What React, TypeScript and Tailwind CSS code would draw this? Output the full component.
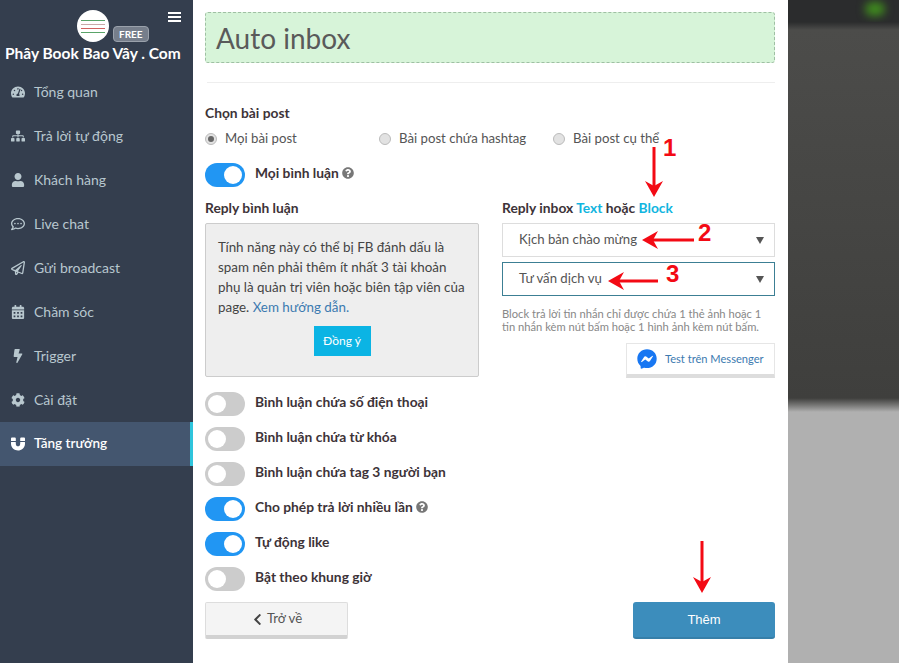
import React from 'react';
import {
  FaTachometerAlt,
  FaSitemap,
  FaUser,
  FaRegCommentDots,
  FaRegPaperPlane,
  FaCalendarAlt,
  FaBolt,
  FaCog,
  FaMagnet,
  FaQuestionCircle,
  FaChevronLeft,
  FaFacebookMessenger,
} from 'react-icons/fa';

const menu = [
  { label: 'Tổng quan', icon: FaTachometerAlt },
  { label: 'Trả lời tự động', icon: FaSitemap },
  { label: 'Khách hàng', icon: FaUser },
  { label: 'Live chat', icon: FaRegCommentDots },
  { label: 'Gửi broadcast', icon: FaRegPaperPlane },
  { label: 'Chăm sóc', icon: FaCalendarAlt },
  { label: 'Trigger', icon: FaBolt },
  { label: 'Cài đặt', icon: FaCog },
  { label: 'Tăng trưởng', icon: FaMagnet, active: true },
];

function Toggle({ on }: { on?: boolean }) {
  return (
    <div className={`flex h-6 w-10 shrink-0 items-center rounded-full px-[3px] ${on ? 'justify-end bg-[#2196f3]' : 'justify-start bg-[#ccc]'}`}>
      <div className="h-[18px] w-[18px] rounded-full bg-white" />
    </div>
  );
}

function ToggleRow({ on, label, help }: { on?: boolean; label: string; help?: boolean }) {
  return (
    <div className="flex h-6 items-center gap-[10px]">
      <Toggle on={on} />
      <span className="pb-1 text-[13.8px] font-bold text-[#3d3338]">{label}</span>
      {help && <FaQuestionCircle className="mb-1 -ml-[7px] text-[12px] text-[#777]" />}
    </div>
  );
}

function Radio({ on, label, className }: { on?: boolean; label: string; className?: string }) {
  return (
    <div className={`flex items-center gap-[8px] ${className ?? ''}`}>
      <div className="flex h-3 w-3 items-center justify-center rounded-full border border-[#bbb] bg-[#e2e2e2]">
        {on && <div className="h-[6px] w-[6px] rounded-full bg-[#666]" />}
      </div>
      <span className="text-[13.2px] text-[#555]">{label}</span>
    </div>
  );
}

function SelectBox({ label, focus }: { label: string; focus?: boolean }) {
  return (
    <div className={`flex h-[34px] items-center justify-between border bg-white pl-[16px] pr-[10px] ${focus ? 'border-[#3c7f94]' : 'border-[#ddd]'}`}>
      <span className="text-[13.2px] text-[#555]">{label}</span>
      <span className="h-0 w-0 border-x-[4px] border-t-[7px] border-x-transparent border-t-[#555]" />
    </div>
  );
}

// red annotation arrow, drawn pointing right and rotated by the caller
function Arrow({ length, className }: { length: number; className: string }) {
  return (
    <svg className={`absolute ${className}`} width={length} height="18" viewBox={`0 0 ${length} 18`}>
      <path d={`M0 7.5h${length - 10}v3H0z`} fill="#f30a14" />
      <path d={`M${length - 16} 0L${length} 9L${length - 16} 18L${length - 11} 9z`} fill="#f30a14" />
    </svg>
  );
}

export default function App() {
  return (
    <div className="relative flex h-[663px] w-full overflow-hidden bg-white font-['Lato',sans-serif]">
      <aside className="w-[193px] shrink-0 bg-[#343e4e]">
        <div className="relative h-[70px]">
          <div className="absolute left-[77px] top-[10px] flex h-8 w-8 flex-col items-center justify-center gap-[3px] rounded-full bg-white">
            <div className="h-px w-6 bg-[#5aa469]" />
            <div className="h-px w-6 bg-[#c9a9a9]" />
            <div className="h-px w-6 bg-[#d0605f]" />
            <div className="h-px w-6 bg-[#5aa469]" />
          </div>
          <div className="absolute left-[113px] top-[26px] rounded-[4px] border border-[#9aa1ab] bg-[#767e8b] px-[5px] text-[10px] font-bold leading-[14px] text-white">FREE</div>
          <div className="absolute left-[168px] top-[12px] flex w-[13px] flex-col gap-[2px]">
            <div className="h-[2px] bg-white" />
            <div className="h-[2px] bg-white" />
            <div className="h-[2px] bg-white" />
          </div>
          <div className="absolute left-[5px] top-[43px] whitespace-nowrap text-[15.5px] font-bold leading-5 text-white">Phây Book Bao Vây . Com</div>
        </div>
        <nav>
          {menu.map((item) => (
            <div
              key={item.label}
              className={`flex h-[44px] items-center pl-[11px] ${item.active ? 'border-r-[3px] border-[#2ec4dc] bg-[#44566f] font-semibold text-white' : 'text-[#b8c7ce]'}`}
            >
              <span className="flex w-[23px] shrink-0 text-[14px]">
                <item.icon />
              </span>
              <span className={`pb-[2px] ${item.active ? 'text-[13.5px]' : 'text-[14px]'}`}>{item.label}</span>
            </div>
          ))}
        </nav>
      </aside>

      <main className="w-[595px] shrink-0 pl-3 pr-[13px] pt-3">
        <div className="flex h-[51px] items-center rounded-[3px] border border-dashed border-[#9fbfa3] bg-[#d7f4d9] pl-[10px]">
          <h1 className="text-[28px] text-[#5a5a5a]">Auto inbox</h1>
        </div>
        <div className="ml-[2px] mt-[19px] h-px bg-[#eee]" />
        <div className="mt-[20px] text-[13.8px] font-bold leading-5 text-[#3d3338]">Chọn bài post</div>
        <div className="mt-[6px] flex h-5 items-center">
          <Radio on label="Mọi bài post" className="w-[174px]" />
          <Radio label="Bài post chứa hashtag" className="w-[174px]" />
          <Radio label="Bài post cụ thể" />
        </div>
        <div className="mt-[14px]">
          <ToggleRow on label="Mọi bình luận" help />
        </div>

        <div className="mt-[11px] flex gap-[23px]">
          <div className="w-[274px] shrink-0">
            <div className="text-[13.8px] font-bold leading-5 text-[#3d3338]">Reply bình luận</div>
            <div className="mt-[5px] flex h-[154px] flex-col items-center rounded-[2px] border border-[#ccc] bg-[#eee] pl-[12px] pr-[9px] pt-[13px]">
              <p className="self-start text-[13.4px] leading-5 text-[#444]">
                Tính năng này có thể bị FB đánh dấu là spam nên phải thêm ít nhất 3 tài khoản phụ là quản trị viên hoặc biên tập viên của page.{' '}
                <span className="text-[#3c7ab0]">Xem hướng dẫn.</span>
              </p>
              <div className="mt-[9px] -ml-[3px] flex h-[30px] w-[57px] items-center justify-center bg-[#0bb4e4] text-[12px] text-white">Đồng ý</div>
            </div>
          </div>
          <div className="min-w-0 flex-1">
            <div className="text-[13.8px] font-bold leading-5 text-[#3d3338]">
              Reply inbox <span className="text-[#12b5e0]">Text</span> hoặc <span className="text-[#12b5e0]">Block</span>
            </div>
            <div className="mt-[5px] flex flex-col gap-[5px]">
              <SelectBox label="Kịch bản chào mừng" />
              <SelectBox label="Tư vấn dịch vụ" focus />
            </div>
            <p className="mt-[11px] text-[11.2px] leading-[13px] text-[#888]">
              Block trả lời tin nhắn chỉ được chứa 1 thẻ ảnh hoặc 1 tin nhắn kèm nút bấm hoặc 1 hình ảnh kèm nút bấm.
            </p>
            <div className="mt-[10px] flex justify-end">
              <div className="flex h-[35px] w-[149px] items-center gap-[8px] border border-b-4 border-[#e6e6e6] border-b-[#ddd] bg-white pl-[10px]">
                <FaFacebookMessenger className="text-[20px] text-[#1877f2]" />
                <span className="text-[11.1px] text-[#3c7ab0]">Test trên Messenger</span>
              </div>
            </div>
          </div>
        </div>

        <div className="mt-[14px] flex flex-col gap-[11px]">
          <ToggleRow label="Bình luận chứa số điện thoại" />
          <ToggleRow label="Bình luận chứa từ khóa" />
          <ToggleRow label="Bình luận chứa tag 3 người bạn" />
          <ToggleRow on label="Cho phép trả lời nhiều lần" help />
          <ToggleRow on label="Tự động like" />
          <ToggleRow label="Bật theo khung giờ" />
        </div>

        <div className="mt-[11px] flex justify-between">
          <div className="flex h-[37px] w-[143px] items-center justify-center gap-[3px] rounded-[2px] border border-b-4 border-[#ddd] border-b-[#d2d2d2] bg-[#f4f4f4] text-[13.2px] text-[#555]">
            <FaChevronLeft className="text-[13px] text-[#444]" />
            Trở về
          </div>
          <div className="flex h-[37px] w-[142px] items-center justify-center rounded-[3px] border-b-2 border-[#367fa9] bg-[#3c8dbc] font-['Liberation_Sans',sans-serif] text-[13px] text-white">Thêm</div>
        </div>
      </main>

      <div className="flex min-w-0 flex-1 flex-col">
        <div className="relative h-[22px] overflow-hidden bg-[#2b2c2d]">
          <div className="absolute left-[77px] top-[2px] h-[14px] w-[20px] rounded-full bg-[#3f8a1e] blur-[4px]" />
        </div>
        <div className="h-[8px] bg-gradient-to-b from-[#2b2c2d] to-[#4c4c4a]" />
        <div className="h-[368px] bg-gradient-to-b from-[#4c4c4a] to-[#3f3f3d]" />
        <div className="h-[14px] bg-gradient-to-b from-[#3f3f3d] to-[#b0b0b0]" />
        <div className="flex-1 bg-[#b0b0b0]" />
      </div>

      {/* annotations over the form */}
      <Arrow length={50} className="left-[629px] top-[163px] rotate-90" />
      <Arrow length={52} className="left-[642px] top-[231px] rotate-180" />
      <Arrow length={50} className="left-[608px] top-[272px] rotate-180" />
      <Arrow length={52} className="left-[676px] top-[558px] rotate-90" />
      <span className="absolute left-[663px] top-[136px] font-['Liberation_Sans',sans-serif] text-[24px] font-bold leading-6 text-[#f30a14]">1</span>
      <span className="absolute left-[698px] top-[221px] font-['Liberation_Sans',sans-serif] text-[24px] font-bold leading-6 text-[#f30a14]">2</span>
      <span className="absolute left-[666px] top-[262px] font-['Liberation_Sans',sans-serif] text-[24px] font-bold leading-6 text-[#f30a14]">3</span>
    </div>
  );
}
